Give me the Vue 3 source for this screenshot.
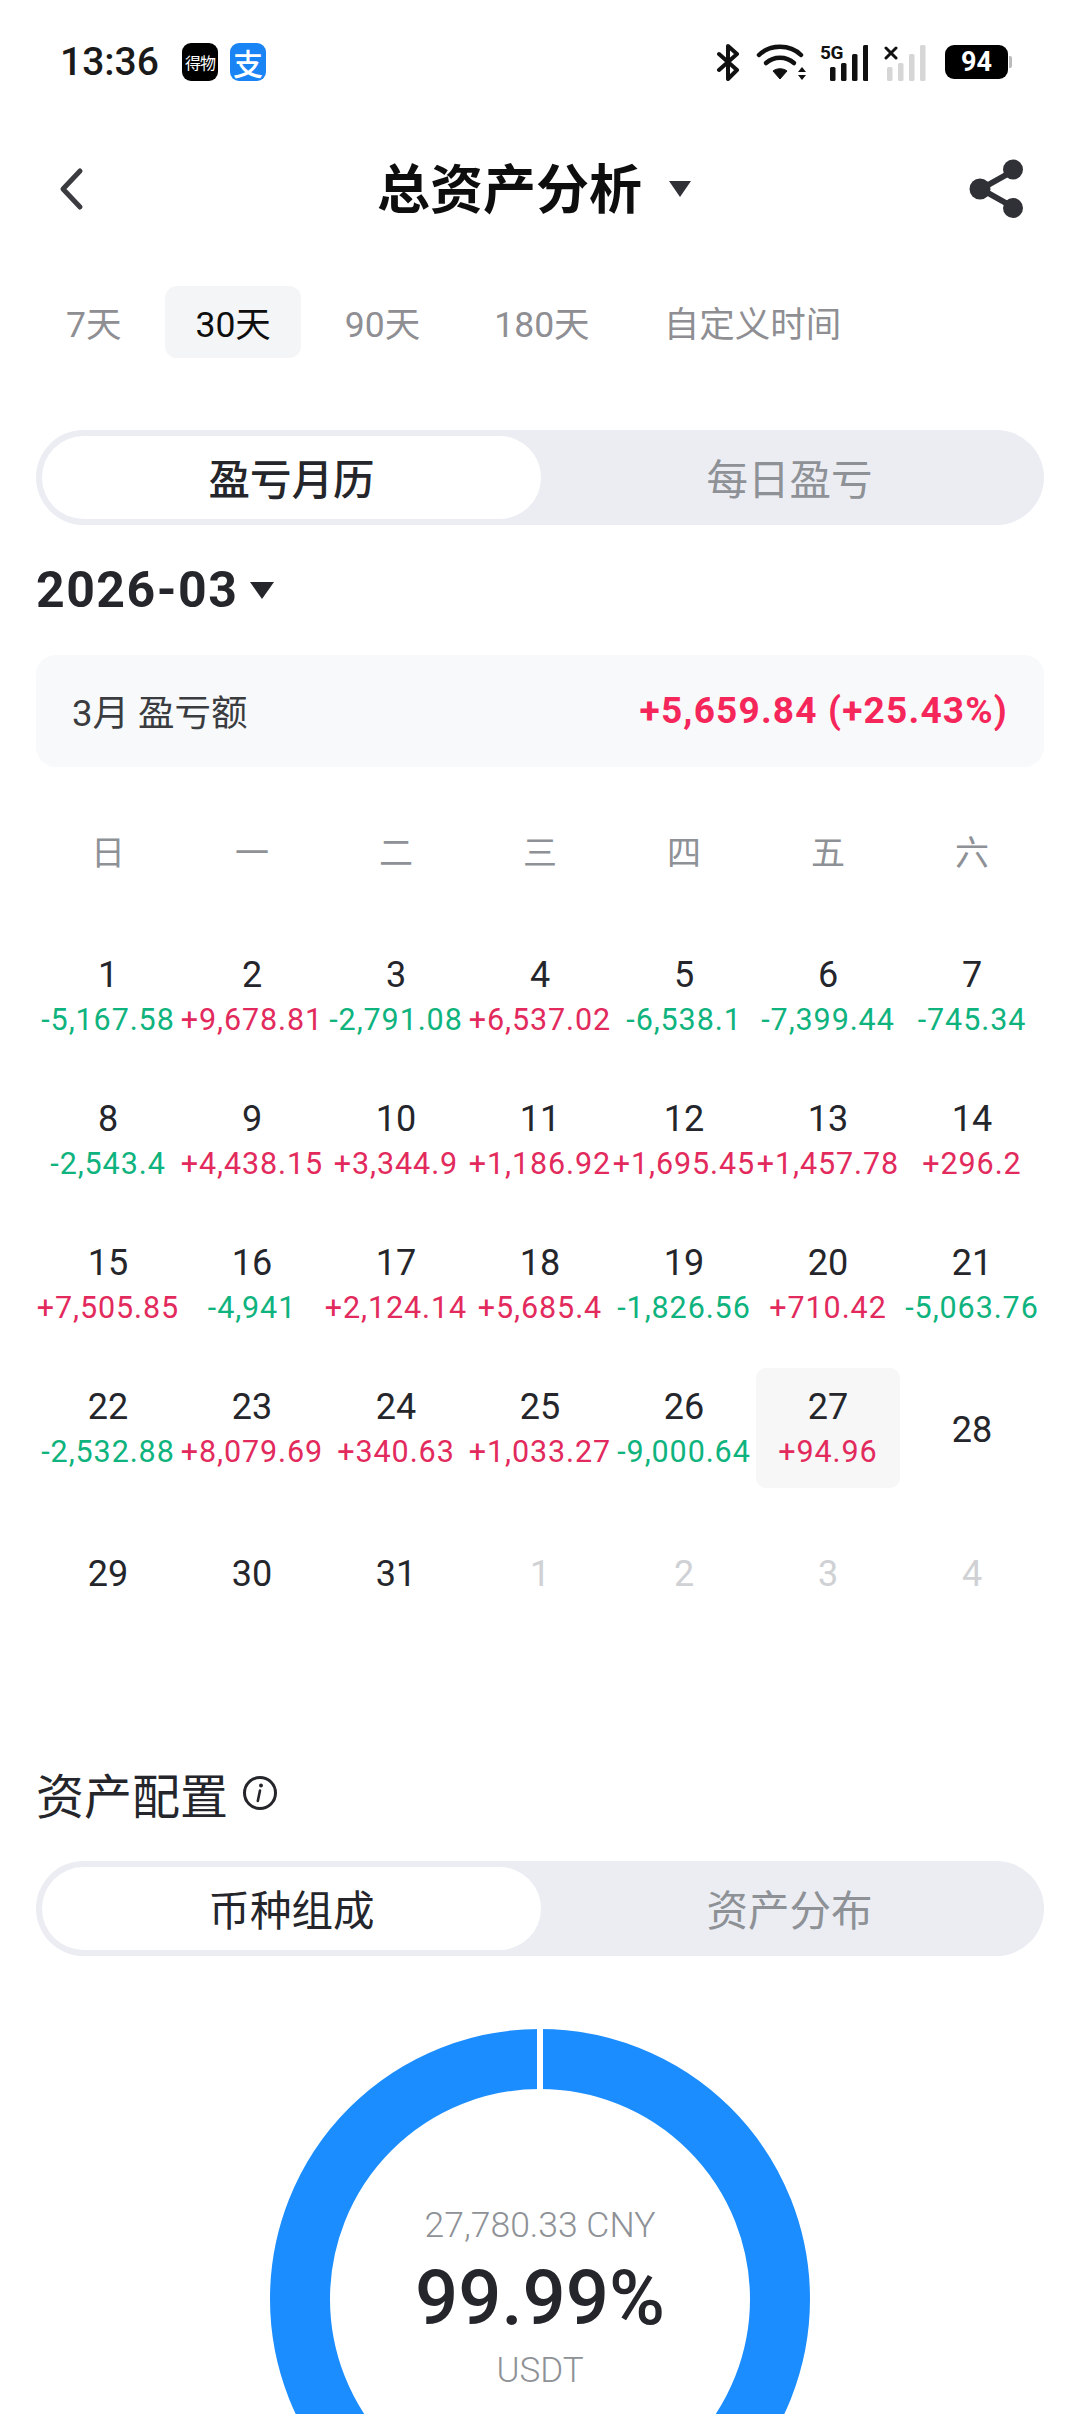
<script setup>
const weekdays = ['日', '一', '二', '三', '四', '五', '六']
const days = [
  { d: 1, v: '-5,167.58' }, { d: 2, v: '+9,678.81' }, { d: 3, v: '-2,791.08' }, { d: 4, v: '+6,537.02' }, { d: 5, v: '-6,538.1' }, { d: 6, v: '-7,399.44' }, { d: 7, v: '-745.34' },
  { d: 8, v: '-2,543.4' }, { d: 9, v: '+4,438.15' }, { d: 10, v: '+3,344.9' }, { d: 11, v: '+1,186.92' }, { d: 12, v: '+1,695.45' }, { d: 13, v: '+1,457.78' }, { d: 14, v: '+296.2' },
  { d: 15, v: '+7,505.85' }, { d: 16, v: '-4,941' }, { d: 17, v: '+2,124.14' }, { d: 18, v: '+5,685.4' }, { d: 19, v: '-1,826.56' }, { d: 20, v: '+710.42' }, { d: 21, v: '-5,063.76' },
  { d: 22, v: '-2,532.88' }, { d: 23, v: '+8,079.69' }, { d: 24, v: '+340.63' }, { d: 25, v: '+1,033.27' }, { d: 26, v: '-9,000.64' }, { d: 27, v: '+94.96', today: true }, { d: 28 },
  { d: 29 }, { d: 30 }, { d: 31 }, { d: 1, off: true }, { d: 2, off: true }, { d: 3, off: true }, { d: 4, off: true }
]
const tabs = ['7天', '30天', '90天', '180天', '自定义时间']
</script>

<template>
  <div class="page">
    <div class="status">
      <span class="time">13:36</span>
      <span class="app app-dewu">得物</span>
      <span class="app app-ali">支</span>
      <span class="spacer"></span>
      <svg class="bt" width="24" height="38" viewBox="0 0 24 38"><path d="M3 11 L21 27 L12 36 V3 L21 11 L3 27" fill="none" stroke="#111" stroke-width="4" stroke-linejoin="round" stroke-linecap="round"/></svg>
      <svg class="wifi" width="52" height="38" viewBox="0 0 52 38">
        <path d="M3 12 C14 1 34 1 45 12" fill="none" stroke="#111" stroke-width="4.5" stroke-linecap="round"/>
        <path d="M10 20 C18 13 30 13 38 20" fill="none" stroke="#111" stroke-width="4.5" stroke-linecap="round"/>
        <path d="M17 28 C21 25 27 25 31 28 L24 36 Z" fill="#111" stroke="#111" stroke-width="1" stroke-linejoin="round"/>
        <path d="M42 29 L46 24 L50 29 Z M42 32 H50 L46 37 Z" fill="#111"/>
      </svg>
      <span class="sig">
        <span class="tag">5G</span>
        <svg width="48" height="38" viewBox="0 0 48 38"><g fill="#111"><rect x="10" y="24" width="5.5" height="14" rx="1.5"/><rect x="21" y="20" width="5.5" height="18" rx="1.5"/><rect x="32" y="11" width="5.5" height="27" rx="1.5"/><rect x="43" y="2" width="5.5" height="36" rx="1.5"/></g></svg>
      </span>
      <span class="sig sig2">
        <svg class="x" width="14" height="14" viewBox="0 0 14 14"><path d="M2 2 L12 12 M12 2 L2 12" stroke="#111" stroke-width="3" stroke-linecap="round"/></svg>
        <svg width="42" height="38" viewBox="0 0 42 38"><g fill="#d6d6d6"><rect x="3" y="24" width="5.5" height="14" rx="1.5"/><rect x="14" y="20" width="5.5" height="18" rx="1.5"/><rect x="25" y="11" width="5.5" height="27" rx="1.5"/><rect x="36" y="2" width="5.5" height="36" rx="1.5"/></g></svg>
      </span>
      <span class="battery">94</span>
      <span class="nub"></span>
    </div>

    <div class="nav">
      <svg class="back" width="26" height="44" viewBox="0 0 26 44"><path d="M22 4 L5 22 L22 40" fill="none" stroke="#3a3c40" stroke-width="5" stroke-linecap="round" stroke-linejoin="round"/></svg>
      <div class="title"><span>总资产分析</span><i class="tri tri-title"></i></div>
      <svg class="share" width="56" height="60" viewBox="0 0 56 60"><path d="M44 12 L12 30 L44 48" fill="none" stroke="#2f3136" stroke-width="6"/><circle cx="44" cy="10.5" r="10" fill="#2f3136"/><circle cx="11" cy="30" r="10.5" fill="#2f3136"/><circle cx="44" cy="49" r="10" fill="#2f3136"/></svg>
    </div>

    <div class="tabs">
      <span v-for="(t, i) in tabs" :key="t" class="tab" :class="{ active: i === 1 }">{{ t }}</span>
    </div>

    <div class="seg seg-first">
      <span class="seg-on">盈亏月历</span>
      <span class="seg-off">每日盈亏</span>
    </div>

    <div class="month"><span>2026-03</span><i class="tri tri-month"></i></div>

    <div class="summary">
      <span class="sum-label">3月 盈亏额</span>
      <span class="sum-val">+5,659.84 (+25.43%)</span>
    </div>

    <div class="weekdays">
      <span v-for="w in weekdays" :key="w">{{ w }}</span>
    </div>

    <div class="grid">
      <div v-for="(c, i) in days" :key="i" class="cell" :class="{ today: c.today, off: c.off }">
        <span class="num">{{ c.d }}</span>
        <span v-if="c.v" class="val" :class="c.v[0] === '+' ? 'up' : 'down'">{{ c.v }}</span>
      </div>
    </div>

    <div class="section">
      <span>资产配置</span>
      <svg width="36" height="36" viewBox="0 0 36 36"><circle cx="18" cy="18" r="15.5" fill="none" stroke="#24262b" stroke-width="3"/><circle cx="19" cy="10.5" r="2" fill="#24262b"/><path d="M18 15.5 L15.8 26" stroke="#24262b" stroke-width="2.6" stroke-linecap="round"/></svg>
    </div>

    <div class="seg seg-second">
      <span class="seg-on normal">币种组成</span>
      <span class="seg-off">资产分布</span>
    </div>

    <div class="donut">
      <svg width="540" height="540" viewBox="0 0 540 540">
        <circle cx="270" cy="270" r="240" fill="none" stroke="#1b8dff" stroke-width="60"/>
        <rect x="267" y="0" width="6" height="62" fill="#fff"/>
      </svg>
      <div class="donut-text">
        <span class="d-amt">27,780.33 CNY</span>
        <span class="d-pct">99.99%</span>
        <span class="d-name">USDT</span>
      </div>
    </div>
  </div>
</template>

<style scoped>
.page {
  width: 1080px;
  height: 2414px;
  overflow: hidden;
  background: #fff;
  font-family: Roboto, "Noto Sans CJK SC", sans-serif;
  color: #24262b;
  box-sizing: border-box;
}
.status {
  height: 124px;
  display: flex;
  align-items: center;
  padding: 0 68px 0 60px;
  box-sizing: border-box;
}
.time { font-size: 39px; font-weight: 500; color: #1a1a1a; width: 122px; }
.app {
  width: 36px; height: 38px; border-radius: 9px;
  display: flex; align-items: center; justify-content: center;
  margin-right: 12px;
}
.app-dewu { background: #000; color: #fff; font-size: 16px; letter-spacing: -1px; white-space: nowrap; }
.app-ali { background: #1a84f5; color: #fff; font-size: 30px; font-weight: 500; }
.spacer { flex: 1; }
.bt { margin-right: 16px; }
.wifi { margin-right: 12px; }
.sig { position: relative; width: 48px; height: 38px; margin-right: 16px; display: block; }
.sig svg { display: block; }
.tag { position: absolute; left: 0; top: 0; font-size: 19px; font-weight: 700; color: #111; line-height: 19px; letter-spacing: -0.5px; }
.sig2 { width: 42px; margin-right: 19px; }
.sig2 .x { position: absolute; left: 0; top: 3px; }
.battery {
  width: 63px; height: 34px; border-radius: 9px; background: #000; color: #fff;
  font-size: 27px; font-weight: 700; display: flex; align-items: center; justify-content: center;
}
.nub { width: 3px; height: 12px; background: #bbb; border-radius: 0 2px 2px 0; margin-left: 1px; }

.nav {
  height: 130px;
  display: flex; align-items: center; justify-content: space-between;
  padding: 0 55px 0 58px;
  position: relative;
  box-sizing: border-box;
}
.title { position: absolute; left: 377px; top: 0; height: 124px; display: flex; align-items: center; font-size: 53px; font-weight: 700; color: #0e0e0e; }
.tri { display: block; width: 0; height: 0; border-style: solid; border-color: #2f3136 transparent transparent transparent; }
.tri-title { border-width: 16px 11px 0 11px; margin: 6px 0 0 27px; }

.tabs { display: flex; align-items: center; padding: 32px 0 0 36px; }
.tab { font-size: 35.5px; color: #8e8e93; padding: 0 30px; margin-right: 14px; height: 72px; line-height: 78px; border-radius: 12px; white-space: nowrap; }
.tab.active { background: #f4f5f7; color: #0e0e0e; }

.seg {
  margin: 0 36px; height: 95px; box-sizing: border-box; padding: 6px;
  border-radius: 48px; background: #ebedf3; display: flex; align-items: stretch;
}
.seg-first { margin-top: 72px; }
.seg-on {
  width: 499px; background: #fff; border-radius: 42px; display: flex; align-items: center; justify-content: center;
  font-size: 41.5px; font-weight: 500; color: #24262b; padding-bottom: 2px; box-sizing: border-box;
}
.seg-on.normal { font-weight: 400; }
.seg-off { flex: 1; display: flex; align-items: center; justify-content: center; font-size: 41.5px; color: #8e9196; padding-bottom: 2px; }

.month { margin: 30px 36px 0; height: 70px; display: flex; align-items: center; font-size: 50px; font-weight: 700; letter-spacing: 1.5px; }
.tri-month { border-width: 17px 12px 0 12px; margin-left: 12px; border-top-color: #24262b; }

.summary {
  margin: 30px 36px 0; height: 112px; box-sizing: border-box; padding: 0 36px 2px; border-radius: 20px; background: #f8f9fb;
  display: flex; align-items: center; justify-content: space-between;
}
.sum-label { font-size: 36.5px; color: #3a3c40; }
.sum-val { font-size: 37px; font-weight: 700; color: #f5265a; letter-spacing: 1.2px; }

.weekdays { margin: 48px 36px 0; display: grid; grid-template-columns: repeat(7, 144px); height: 70px; align-items: center; }
.weekdays span { text-align: center; font-size: 34px; color: #8e9196; }

.grid { margin: 51px 36px 0; display: grid; grid-template-columns: repeat(7, 144px); grid-auto-rows: 144px; }
.cell { height: 120px; box-sizing: border-box; padding-top: 4px; display: flex; flex-direction: column; align-items: center; justify-content: center; border-radius: 10px; white-space: nowrap; }
.cell.today { background: #f7f7f8; }
.num { font-size: 36px; line-height: 44px; color: #24262b; }
.val { font-size: 30.5px; line-height: 46px; letter-spacing: 0.9px; }
.cell.off .num { color: #cfd1d4; }
.up { color: #e22a5d; }
.down { color: #0fb37e; }

.section { margin: 102px 36px 0; height: 70px; display: flex; align-items: center; gap: 14px; font-size: 48px; color: #24262b; }

.seg-second { margin-top: 33px; }

.donut { position: relative; width: 540px; height: 540px; margin: 73px 0 0 270px; }
.donut svg { display: block; }
.donut-text { position: absolute; left: 0; right: 0; top: 0; height: 537px; display: flex; flex-direction: column; align-items: center; justify-content: center; }
.d-amt { font-size: 35.5px; font-weight: 300; color: #8e9196; line-height: 50px; }
.d-pct { font-size: 76px; font-weight: 500; color: #24262b; line-height: 96px; }
.d-name { font-size: 35px; font-weight: 300; color: #8e9196; line-height: 50px; }
</style>
<style>
html, body { background: #fff; }
</style>
